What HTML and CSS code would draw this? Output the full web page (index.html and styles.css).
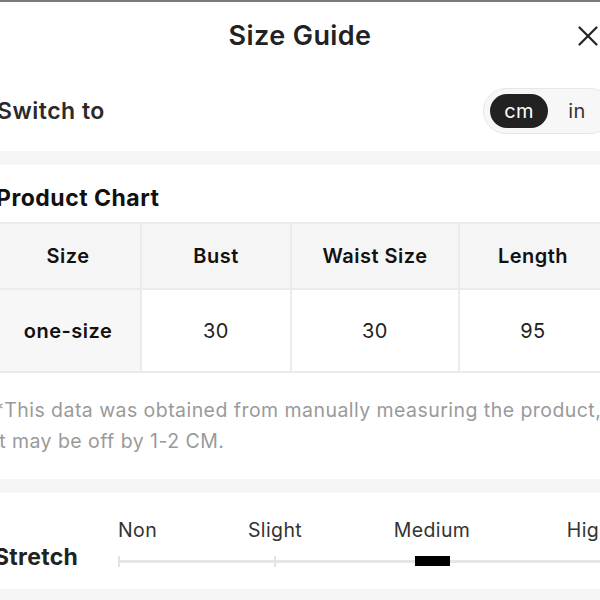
FILE: index.html
```html
<!DOCTYPE html>
<html>
<head>
<meta charset="utf-8">
<link rel="stylesheet" href="styles.css">
</head>
<body>
<div class="topline"></div>
<div class="sheet">
  <header class="head">
    <span></span>
    <h1 class="title">Size Guide</h1>
    <button class="close" aria-label="Close">
      <svg width="20" height="20" viewBox="0 0 20 20"><path d="M1.5 1.5 L18.5 18.5 M18.5 1.5 L1.5 18.5" stroke="#222" stroke-width="2.2" stroke-linecap="round" fill="none"/></svg>
    </button>
  </header>
  <div class="switch-row">
    <span class="switch-label">Switch to</span>
    <div class="toggle">
      <span class="opt active">cm</span>
      <span class="opt">in</span>
    </div>
  </div>
  <div class="band"></div>
  <section class="chart">
    <h2 class="chart-title">Product Chart</h2>
    <table class="tbl">
      <colgroup><col class="c1"><col class="c2"><col class="c3"><col class="c4"></colgroup>
      <thead>
        <tr><th>Size</th><th>Bust</th><th>Waist Size</th><th>Length</th></tr>
      </thead>
      <tbody>
        <tr><td class="first">one-size</td><td>30</td><td>30</td><td>95</td></tr>
      </tbody>
    </table>
    <p class="note">*This data was obtained from manually measuring the product, it may be off by 1-2 CM.</p>
  </section>
  <div class="band"></div>
  <section class="stretch">
    <span class="stretch-label">Stretch</span>
    <div class="scale">
      <div class="labels">
        <span class="lab lab-first">Non</span>
        <span class="lab">Slight</span>
        <span class="lab">Medium</span>
        <span class="lab">High</span>
      </div>
      <div class="track">
        <span class="tick t0"></span>
        <span class="tick t1"></span>
        <span class="marker"></span>
      </div>
    </div>
  </section>
  <div class="band"></div>
</div>
</body>
</html>
```
FILE: styles.css
```css
html, body {
  margin: 0;
  padding: 0;
  background: #fff;
  overflow: hidden;
}
body {
  font-family: Inter, "Noto Sans", sans-serif;
  color: #222;
  width: 600px;
  height: 600px;
}
.topline {
  height: 2px;
  background: #7a7a7a;
}
.sheet {
  width: 612px;
  margin-left: -6px;
}
.head {
  display: grid;
  grid-template-columns: 1fr auto 1fr;
  align-items: center;
  height: 68px;
}
.title {
  margin: 0;
  font-size: 27px;
  font-weight: 600;
  letter-spacing: 0.4px;
  line-height: 32px;
  color: #222;
}
.close {
  justify-self: end;
  margin-right: 8px;
  width: 20px;
  height: 20px;
  padding: 0;
  border: 0;
  background: none;
  display: flex;
}
.switch-row {
  display: flex;
  align-items: center;
  justify-content: space-between;
  height: 81px;
}
.switch-label {
  font-size: 23px;
  font-weight: 600;
  letter-spacing: 0.5px;
  color: #2a2a2a;
  margin-left: 3px;
}
.toggle {
  display: flex;
  align-items: center;
  box-sizing: border-box;
  height: 46px;
  padding: 0 6px;
  border: 1px solid #e6e6e6;
  border-radius: 23px;
  background: #f7f7f7;
  margin-right: -7px;
}
.opt {
  width: 58px;
  height: 34px;
  border-radius: 17px;
  display: flex;
  align-items: center;
  justify-content: center;
  font-size: 20px;
  letter-spacing: 0.3px;
  color: #333;
}
.opt.active {
  background: #222;
  color: #fff;
}
.band {
  height: 14px;
  background: #f5f5f5;
}
.chart {
  padding: 18px 0 22px;
}
.chart-title {
  margin: 0 0 9px 2px;
  font-size: 23px;
  font-weight: 700;
  letter-spacing: 0.5px;
  line-height: 30px;
  color: #111;
}
.tbl {
  width: 612px;
  border-collapse: collapse;
  table-layout: fixed;
}
.c1 { width: 146px; }
.c2 { width: 150px; }
.c3 { width: 168px; }
.c4 { width: 148px; }
.tbl th, .tbl td {
  border: 2px solid #ebebeb;
  text-align: center;
  padding: 0;
  font-size: 20px;
  letter-spacing: 0.5px;
}
.tbl th {
  height: 64px;
  background: #f5f5f5;
  font-weight: 600;
  color: #111;
}
.tbl td {
  height: 81px;
  font-weight: 400;
  color: #222;
}
.tbl td.first {
  background: #f7f7f7;
  font-weight: 600;
  color: #111;
}
.note {
  margin: 22px 0 0 0;
  font-size: 19.5px;
  letter-spacing: 0.45px;
  line-height: 31px;
  color: #9a9a9a;
}
.stretch {
  display: flex;
  height: 96px;
  box-sizing: border-box;
  padding-top: 25px;
}
.stretch-label {
  width: 124px;
  flex: none;
  font-size: 23px;
  font-weight: 700;
  letter-spacing: 0.3px;
  line-height: 26px;
  margin-top: 26px;
  color: #222;
}
.scale {
  flex: 1;
}
.labels {
  display: flex;
  height: 24px;
  line-height: 24px;
  font-size: 19.5px;
  letter-spacing: 0.4px;
  color: #333;
  white-space: nowrap;
}
.lab {
  flex: none;
  width: 157px;
  text-align: center;
}
.lab-first {
  width: 78.5px;
  text-align: left;
}
.track {
  position: relative;
  margin-top: 18px;
  height: 3px;
  background: #e6e6e6;
}
.tick {
  position: absolute;
  top: -4px;
  width: 2px;
  height: 11px;
  background: #e3e3e3;
}
.t0 { left: 0; }
.t1 { left: 156px; }
.marker {
  position: absolute;
  left: 297px;
  top: -4px;
  width: 35px;
  height: 10px;
  background: #000;
}
```
